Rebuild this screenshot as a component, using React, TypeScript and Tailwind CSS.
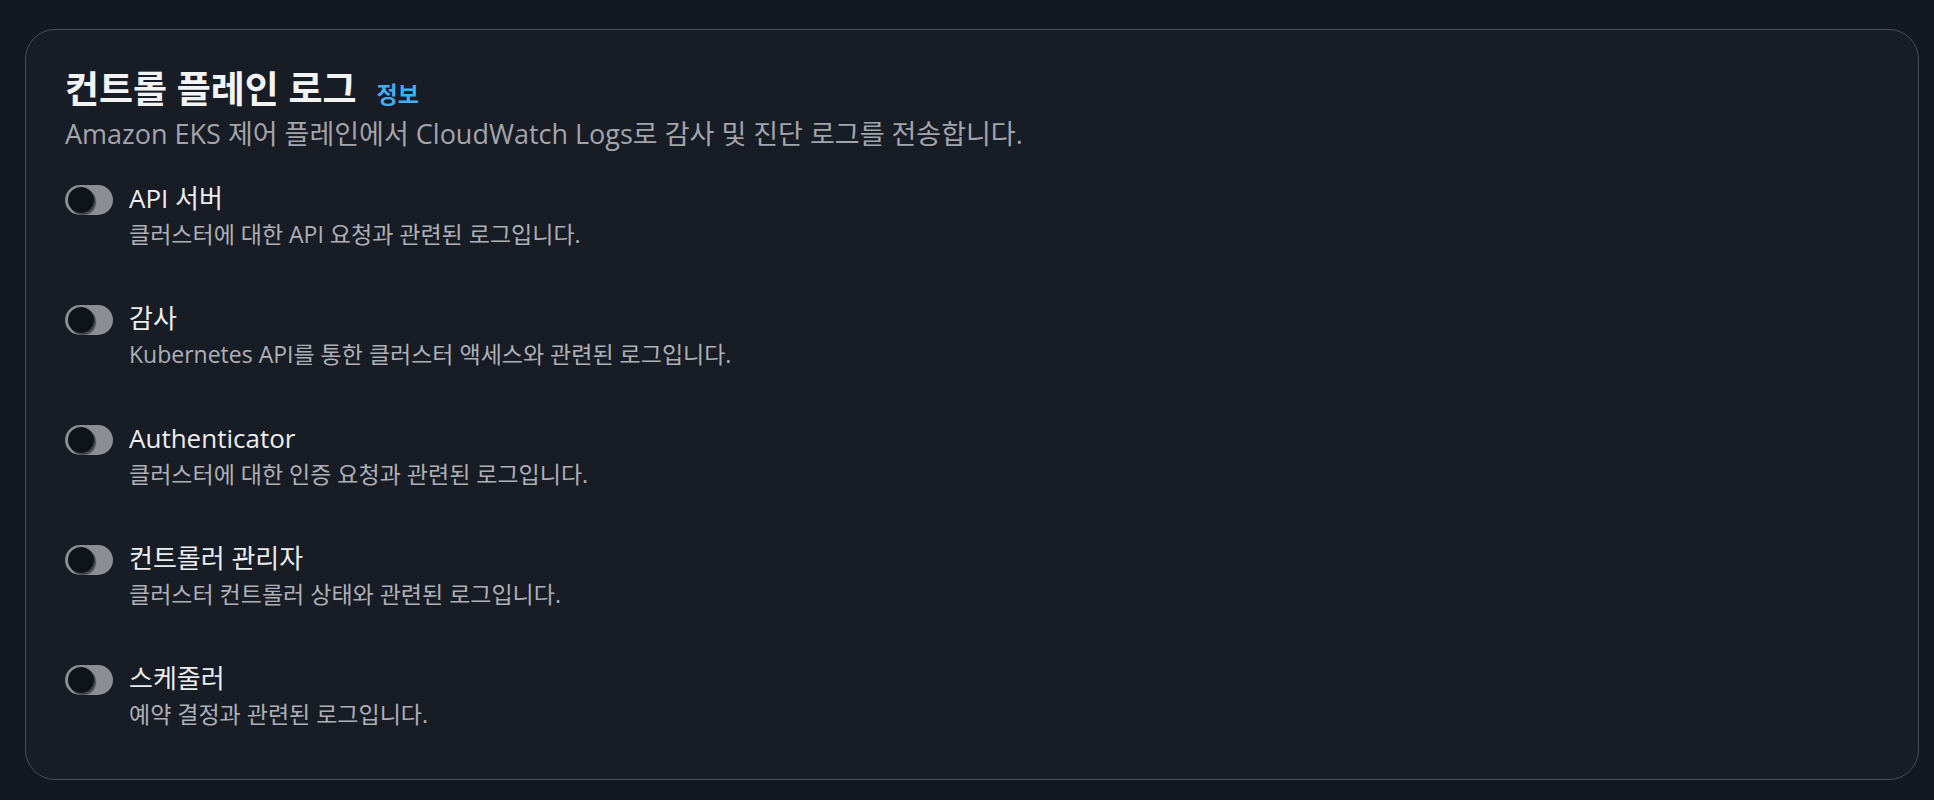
const logTypes = [
  { id: "api", label: "API 서버", description: "클러스터에 대한 API 요청과 관련된 로그입니다." },
  { id: "audit", label: "감사", description: "Kubernetes API를 통한 클러스터 액세스와 관련된 로그입니다." },
  { id: "authenticator", label: "Authenticator", description: "클러스터에 대한 인증 요청과 관련된 로그입니다." },
  { id: "controllerManager", label: "컨트롤러 관리자", description: "클러스터 컨트롤러 상태와 관련된 로그입니다." },
  { id: "scheduler", label: "스케줄러", description: "예약 결정과 관련된 로그입니다." },
];

const Toggle = () => {
  return (
    <span className="mt-[3px] flex h-[30px] w-[48px] shrink-0 items-center rounded-full bg-[#8d8d95] pl-[3px]">
      <span className="h-[26px] w-[26px] rounded-full bg-[#0f131a] shadow-[2px_2px_1px_rgba(40,40,48,0.7)]" />
    </span>
  );
};

const LogRow = ({ label, description }: { label: string; description: string }) => {
  return (
    <div className="flex items-start gap-[16px]">
      <Toggle />
      <div className="flex flex-col gap-[5px]">
        <span className="text-[26px] leading-[32px] text-[#eceef0]">{label}</span>
        <span className="text-[23px] leading-[30px] text-[#aeb0b7]">{description}</span>
      </div>
    </div>
  );
};

export default function App() {
  return (
    <div
      className="min-h-screen bg-[#141820] pl-[25px] pr-[15px] pt-[29px]"
      style={{ fontFamily: '"Open Sans", "Noto Sans CJK KR", sans-serif' }}
    >
      <section className="h-[751px] rounded-[30px] border border-[#4a4e59] bg-[#181c25] pl-[39px] pt-[37px]">
        <header className="flex flex-col gap-[5px]">
          <div className="flex items-baseline gap-[20px]">
            <h2 className="text-[37px] font-bold leading-[44px] text-[#f2f3f5]">컨트롤 플레인 로그</h2>
            <a className="text-[23px] font-bold text-[#42aef5]">정보</a>
          </div>
          <p className="text-[27px] leading-[34px] text-[#a3a5ad]">
            Amazon EKS 제어 플레인에서 CloudWatch Logs로 감사 및 진단 로그를 전송합니다.
          </p>
        </header>
        <div className="mt-[31px] flex flex-col gap-[53px]">
          {logTypes.map((log) => (
            <LogRow key={log.id} label={log.label} description={log.description} />
          ))}
        </div>
      </section>
    </div>
  );
}
